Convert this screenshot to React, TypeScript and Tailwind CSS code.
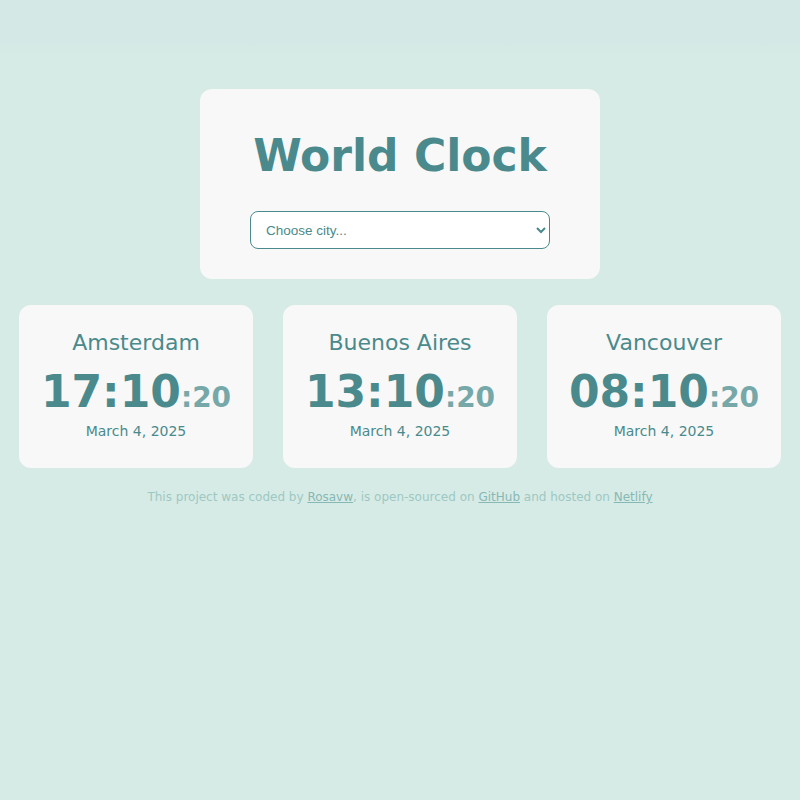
const cities = [
  { name: "Amsterdam", time: "17:10", sec: "20", date: "March 4, 2025" },
  { name: "Buenos Aires", time: "13:10", sec: "20", date: "March 4, 2025" },
  { name: "Vancouver", time: "08:10", sec: "20", date: "March 4, 2025" },
];

function CityCard({ name, time, sec, date }: { name: string; time: string; sec: string; date: string }) {
  return (
    <div className="flex h-[163px] flex-col items-center rounded-xl bg-[#f8f8f8] pt-[24px]">
      <div className="text-[22px] leading-[28px] text-[#4a8a8c]">{name}</div>
      <div className="mt-[9px] leading-[52px]">
        <span className="text-[44px] font-bold text-[#4a8a8c]">{time}</span>
        <span className="text-[28px] font-bold text-[#76a8a9]">:{sec}</span>
      </div>
      <div className="mt-[-7px] text-[14px] text-[#4a8a8c]">{date}</div>
    </div>
  );
}

export default function App() {
  return (
    <div
      className="min-h-screen bg-[#d7ebe6] bg-[linear-gradient(to_bottom,#d4e8e5_0px,#d4e8e5_40px,#d7ebe6_68px)] pt-[89px] pb-10 text-center"
      style={{ fontFamily: '"DejaVu Sans", Verdana, sans-serif' }}
    >
      <div className="mx-auto flex h-[190px] w-[400px] flex-col items-center rounded-xl bg-[#f8f8f8] pt-[38px]">
        <h1 className="text-[44px] font-bold leading-[58px] text-[#4a8a8c]">World Clock</h1>
        <select
          className="mt-[26px] h-[38px] w-[300px] rounded-lg border border-[#4a8a8c] bg-white px-[11px] text-[13.5px] text-[#4a8a8c] outline-none"
          style={{ fontFamily: '"Liberation Sans", Arial, sans-serif' }}
        >
          <option>Choose city...</option>
          <option>Amsterdam</option>
          <option>Buenos Aires</option>
          <option>Vancouver</option>
        </select>
      </div>

      <div className="mx-[19px] mt-[26px] grid grid-cols-3 gap-[30px]">
        {cities.map((c) => (
          <CityCard key={c.name} {...c} />
        ))}
      </div>

      <p className="mt-[20px] text-[12px] text-[#9cc8c3]">
        This project was coded by{" "}
        <a href="#" className="text-[#86b8b5] underline">Rosavw</a>, is open-sourced on{" "}
        <a href="#" className="text-[#86b8b5] underline">GitHub</a> and hosted on{" "}
        <a href="#" className="text-[#86b8b5] underline">Netlify</a>
      </p>
    </div>
  );
}
